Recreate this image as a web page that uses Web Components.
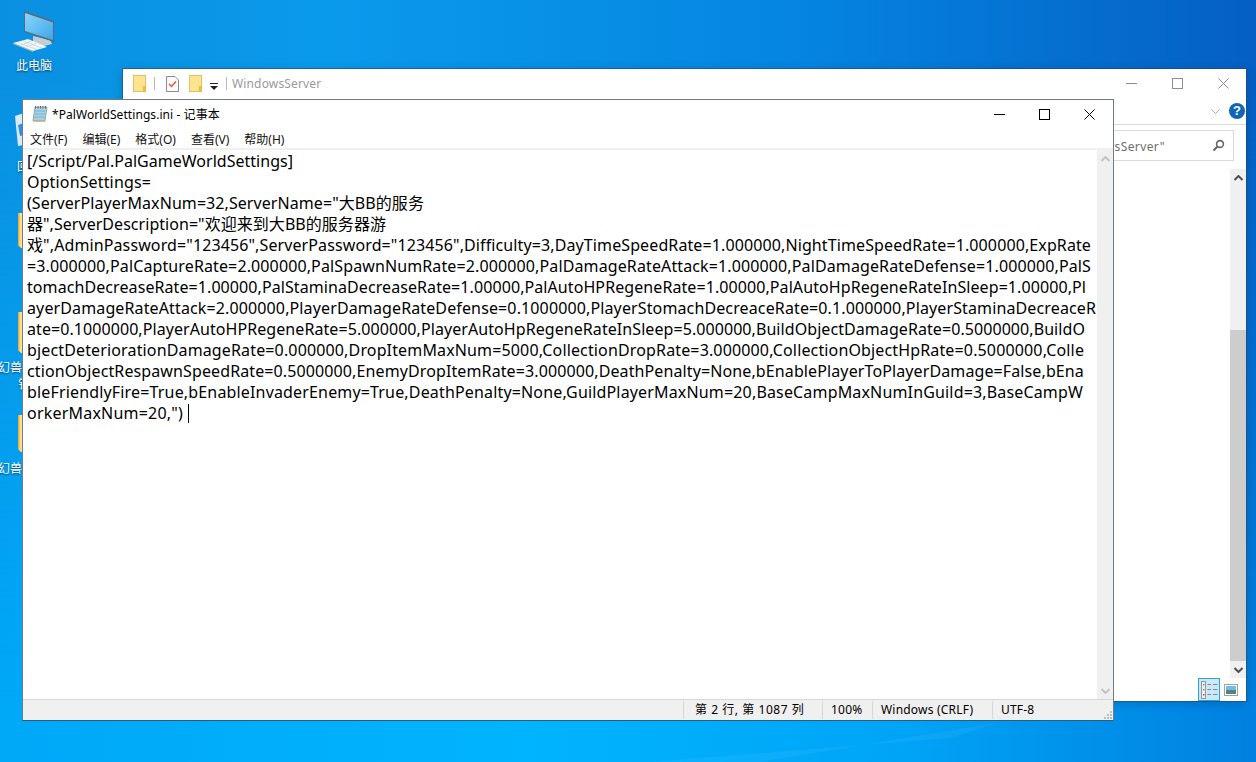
<!DOCTYPE html>
<html lang="zh-CN">
<head>
<meta charset="utf-8">
<title>PalWorldSettings.ini - 记事本</title>
<style>
    html, body { margin: 0; height: 100%; overflow: hidden; }
    body { font-family: "Noto Sans", "Noto Sans CJK SC", sans-serif; }
</style>
</head>
<body>
<win-desktop>
    <desk-icon style="top:7px" kind="pc" label="此电脑" pad="16" gap="4"></desk-icon>
    <desk-icon style="top:113px" kind="bin" label="回" pad="17" gap="9"></desk-icon>
    <desk-icon style="top:213px" kind="folder" tall="35"></desk-icon>
    <desk-icon style="top:312px" kind="folder" tall="41" label="幻兽" sub="钅" pad="-2" gap="6"></desk-icon>
    <desk-icon style="top:415px" kind="folder" tall="37" label="幻兽" pad="-2" gap="8"></desk-icon>
    <explorer-window></explorer-window>
    <notepad-window></notepad-window>
</win-desktop>

<script>
const FONT = '"Noto Sans", "Noto Sans CJK SC", sans-serif';

class WinDesktop extends HTMLElement {
    constructor() {
        super();
        this.attachShadow({ mode: 'open' });
    }
    connectedCallback() {
        this.shadowRoot.innerHTML = `
            <style>
                :host {
                    display: block;
                    position: relative;
                    width: 1256px;
                    height: 762px;
                    overflow: hidden;
                    background: linear-gradient(90deg, #00a8f8 0%, #00b4ff 42%, #00a4f6 72%, #0080e0 100%);
                }
                .top {
                    position: absolute;
                    inset: 0;
                    background: linear-gradient(90deg, #0a90e0 0%, #0a9aec 26%, #0585e0 64%, #055fc4 100%);
                    -webkit-mask-image: linear-gradient(#000 10%, transparent 92%);
                    mask-image: linear-gradient(#000 10%, transparent 92%);
                }
                .streak {
                    position: absolute;
                    inset: 0;
                    background: rgba(255, 255, 255, .05);
                    clip-path: polygon(650px 762px, 950px 738px, 1000px 722px, 760px 762px);
                }
            </style>
            <div class="top"></div>
            <div class="streak"></div>
            <slot></slot>
        `;
    }
}

class DeskIcon extends HTMLElement {
    constructor() {
        super();
        this.attachShadow({ mode: 'open' });
    }
    connectedCallback() {
        const tall = this.getAttribute('tall') || 36;
        const art = {
            pc: `<svg width="60" height="46" viewBox="0 0 60 46">
                    <defs><linearGradient id="scr" x1="0" y1="0" x2="1" y2="1"><stop offset="0" stop-color="#8ad6fa"/><stop offset="1" stop-color="#3da6ec"/></linearGradient></defs>
                    <polygon points="33,29 50,33 52,37 40,40 33,38" fill="#c3ced6"/>
                    <polygon points="24,4 54,14 54,35 24,25" fill="#5a6a76"/>
                    <polygon points="25,6 53,15.5 53,33 25,24" fill="url(#scr)"/>
                    <polygon points="13,36 28,32 47,40 33,44" fill="#f2f6f8"/>
                    <polygon points="13,36 33,44 33,45 13,37" fill="#a9b8c2"/>
                    <path d="M18 35.5L37 42.5M23 34L42 41M21 38L31 34.5M26 40L36 36.5" stroke="#c6d0d8" stroke-width=".7"/>
                </svg>`,
            bin: `<svg width="60" height="36" viewBox="0 0 60 36">
                    <polygon points="15,3 24,0 24,32 18,33" fill="#dce8f2"/>
                    <polygon points="18,12 24,10 24,22 20,23" fill="#2f8fe0"/>
                </svg>`,
            folder: `<svg width="60" height="${tall}" viewBox="0 0 60 ${tall}">
                    <path d="M18 0H24V${tall}H21L18 ${tall - 3}Z" fill="#fde08c"/>
                    <path d="M18 0H19.5V${tall - 2}L18 ${tall - 3}Z" fill="#e8ad48"/>
                </svg>`
        }[this.getAttribute('kind')];
        const label = this.getAttribute('label');
        const sub = this.getAttribute('sub');
        this.shadowRoot.innerHTML = `
            <style>
                :host {
                    position: absolute;
                    left: 0;
                    display: flex;
                    flex-direction: column;
                    font: 12px ${FONT};
                    color: #fff;
                    text-shadow: 0 1px 2px rgba(0, 0, 0, .6);
                }
                svg { display: block; }
                .label {
                    margin: ${this.getAttribute('gap') || 6}px 0 0 ${this.getAttribute('pad') || 0}px;
                    line-height: 17px;
                    white-space: pre;
                }
                .sub { margin-left: 18px; line-height: 17px; width: 4px; overflow: hidden; }
            </style>
            ${art}
            ${label ? `<div class="label">${label}</div>` : ''}
            ${sub ? `<div class="sub">${sub}</div>` : ''}
        `;
    }
}

class CaptionButtons extends HTMLElement {
    constructor() {
        super();
        this.attachShadow({ mode: 'open' });
    }
    connectedCallback() {
        const c = this.getAttribute('color') || '#000';
        const gap = this.getAttribute('gap') || '46';
        this.shadowRoot.innerHTML = `
            <style>
                :host { display: flex; align-items: center; }
                svg { display: block; margin-left: ${gap - 11}px; }
                svg:first-child { margin-left: 0; }
            </style>
            <svg width="11" height="11" viewBox="0 0 11 11"><path d="M0 5.5H11" stroke="${c}" fill="none"/></svg>
            <svg width="11" height="11" viewBox="0 0 11 11"><rect x=".5" y=".5" width="10" height="10" stroke="${c}" fill="none"/></svg>
            <svg width="11" height="11" viewBox="0 0 11 11"><path d="M.5 .5L10.5 10.5M10.5 .5L.5 10.5" stroke="${c}" stroke-width="1" fill="none"/></svg>
        `;
    }
}

class ScrollBar extends HTMLElement {
    constructor() {
        super();
        this.attachShadow({ mode: 'open' });
    }
    connectedCallback() {
        const arrow = this.hasAttribute('active') ? '#505050' : '#c4c4c4';
        const chev = d => `<svg width="9" height="6" viewBox="0 0 9 6"><path d="${d}" stroke="${arrow}" stroke-width="2" fill="none"/></svg>`;
        const space = this.getAttribute('before');
        this.shadowRoot.innerHTML = `
            <style>
                :host {
                    display: flex;
                    flex-direction: column;
                    width: 16px;
                    background: #f0f0f0;
                }
                .btn { height: 17px; display: flex; align-items: center; justify-content: center; flex: none; }
                .track { flex: 1; display: flex; flex-direction: column; }
                .space { flex: none; height: ${space || 0}px; }
                .thumb { flex: 1; background: ${this.hasAttribute('active') ? '#cdcdcd' : 'transparent'}; }
            </style>
            <div class="btn">${chev('M.5 5L4.5 1L8.5 5')}</div>
            <div class="track"><div class="space"></div><div class="thumb"></div></div>
            <div class="btn">${chev('M.5 1L4.5 5L8.5 1')}</div>
        `;
    }
}

class ExplorerWindow extends HTMLElement {
    constructor() {
        super();
        this.attachShadow({ mode: 'open' });
    }
    connectedCallback() {
        const folder = `<svg width="13" height="17" viewBox="0 0 13 17"><rect x=".5" y=".5" width="12" height="16" fill="#fde48f" stroke="#e4c063"/><rect x="10" y="11" width="2.5" height="5.5" fill="#eeb93f"/></svg>`;
        this.shadowRoot.innerHTML = `
            <style>
                :host {
                    position: absolute;
                    left: 123px;
                    top: 69px;
                    width: 1123px;
                    height: 632px;
                    box-sizing: border-box;
                    background: #fff;
                    display: flex;
                    flex-direction: column;
                    box-shadow: 0 0 0 1px rgba(40, 70, 110, .55), 0 2px 10px rgba(0, 0, 0, .2);
                    font: 12px ${FONT};
                }
                .title {
                    flex: none;
                    height: 29px;
                    display: flex;
                    align-items: center;
                    padding: 0 17px 0 10px;
                }
                .title svg { display: block; flex: none; }
                .bar { width: 1px; height: 13px; background: #b8b8b8; flex: none; }
                .name {
                    flex: 1;
                    color: #9a9a9a;
                    font-size: 12px;
                    letter-spacing: .15px;
                    margin-left: 5px;
                }
                .ribbon {
                    flex: none;
                    height: 26px;
                    border-bottom: 1px solid #dadada;
                    display: flex;
                    align-items: center;
                    justify-content: flex-end;
                    padding-right: 1px;
                    gap: 9px;
                }
                .help {
                    width: 16px;
                    height: 16px;
                    border-radius: 50%;
                    background: #0f66b4;
                    color: #fff;
                    font: bold 13px/16px "Liberation Sans", sans-serif;
                    text-align: center;
                }
                .address {
                    flex: none;
                    height: 44px;
                    display: flex;
                    justify-content: flex-end;
                    align-items: flex-start;
                    padding: 5px 12px 0 0;
                    box-sizing: border-box;
                }
                .search {
                    width: 300px;
                    height: 31px;
                    box-sizing: border-box;
                    border: 1px solid #d9d9d9;
                    display: flex;
                    align-items: center;
                    justify-content: flex-end;
                    gap: 47px;
                    padding-right: 8px;
                    color: #6d6d6d;
                    letter-spacing: .4px;
                }
                .search span { padding-top: 2px; }
                .body { flex: 1; display: flex; justify-content: flex-end; min-height: 0; }
                .views {
                    flex: none;
                    height: 23px;
                    display: flex;
                    justify-content: flex-end;
                    align-items: stretch;
                    padding-right: 8px;
                    gap: 4px;
                }
                .view-a {
                    width: 22px;
                    box-sizing: border-box;
                    background: #cce8f6;
                    border: 1px solid #27a4e0;
                    display: flex;
                    align-items: center;
                    justify-content: center;
                }
                .view-b { display: flex; align-items: center; }
            </style>
            <div class="title">
                ${folder}
                <span class="bar" style="margin:0 11px 0 8px"></span>
                <svg width="13" height="16" viewBox="0 0 13 16" style="margin-right:10px"><path d="M.5 .5H9L12.5 4V15.5H.5Z" fill="#fafafa" stroke="#8a8a8a"/><path d="M3 8L5.5 10.5L10 5.5" stroke="#e2562a" stroke-width="1.4" fill="none"/></svg>
                ${folder}
                <svg width="9" height="7" viewBox="0 0 9 7" style="margin:5px 0 0 8px"><path d="M0 0H8V1H0ZM0 3H8L4 7Z" fill="#222"/></svg>
                <span class="bar" style="margin-left:7px"></span>
                <span class="name">WindowsServer</span>
                <caption-buttons color="#8c8c8c" gap="46"></caption-buttons>
            </div>
            <div class="ribbon">
                <svg width="9" height="5" viewBox="0 0 9 5"><path d="M.5 .5L4.5 4.5L8.5 .5" stroke="#a8a8a8" fill="none"/></svg>
                <div class="help">?</div>
            </div>
            <div class="address">
                <div class="search"><span>wsServer"</span>
                    <svg width="13" height="13" viewBox="0 0 13 13"><circle cx="8" cy="5" r="3.4" stroke="#666" stroke-width="1.6" fill="none"/><path d="M5.5 7.5L1.5 11.5" stroke="#666" stroke-width="2.2"/></svg>
                </div>
            </div>
            <div class="body">
                <scroll-bar active before="144"></scroll-bar>
            </div>
            <div class="views">
                <div class="view-a">
                    <svg width="17" height="18" viewBox="0 0 17 18">
                        <rect x=".5" y=".5" width="4" height="17" fill="#eee" stroke="#999"/>
                        <rect x="2" y="3" width="1.4" height="1.4" fill="#888"/><rect x="2" y="8" width="1.4" height="1.4" fill="#888"/><rect x="2" y="13" width="1.4" height="1.4" fill="#c33"/>
                        <path d="M6.5 3.5H10M12 3.5H16.5M6.5 8.5H10M12 8.5H16.5M6.5 13.5H10M12 13.5H16.5" stroke="#7d8a94"/>
                    </svg>
                </div>
                <div class="view-b">
                    <svg width="14" height="12" viewBox="0 0 14 12"><rect x=".5" y=".5" width="13" height="11" fill="#fff" stroke="#a0a0a0"/><rect x="2" y="2" width="10" height="4" fill="#6cbcf0"/><rect x="2" y="6" width="10" height="4" fill="#5c8278"/></svg>
                </div>
            </div>
        `;
    }
}

class NotepadWindow extends HTMLElement {
    constructor() {
        super();
        this.attachShadow({ mode: 'open' });
    }
    connectedCallback() {
        // second value is where the line ends in the reference (page x)
        const lines = [
            ['[/Script/Pal.PalGameWorldSettings]', 293],
            ['OptionSettings=', 151],
            ['(ServerPlayerMaxNum=32,ServerName="大BB的服务', 424],
            ['器",ServerDescription="欢迎来到大BB的服务器游', 386],
            ['戏",AdminPassword="123456",ServerPassword="123456",Difficulty=3,DayTimeSpeedRate=1.000000,NightTimeSpeedRate=1.000000,ExpRate', 1091],
            ['=3.000000,PalCaptureRate=2.000000,PalSpawnNumRate=2.000000,PalDamageRateAttack=1.000000,PalDamageRateDefense=1.000000,PalS', 1091],
            ['tomachDecreaseRate=1.00000,PalStaminaDecreaseRate=1.00000,PalAutoHPRegeneRate=1.00000,PalAutoHpRegeneRateInSleep=1.00000,Pl', 1086],
            ['ayerDamageRateAttack=2.000000,PlayerDamageRateDefense=0.1000000,PlayerStomachDecreaceRate=0.1.000000,PlayerStaminaDecreaceR', 1096],
            ['ate=0.1000000,PlayerAutoHPRegeneRate=5.000000,PlayerAutoHpRegeneRateInSleep=5.000000,BuildObjectDamageRate=0.5000000,BuildO', 1085],
            ['bjectDeteriorationDamageRate=0.000000,DropItemMaxNum=5000,CollectionDropRate=3.000000,CollectionObjectHpRate=0.5000000,Colle', 1084],
            ['ctionObjectRespawnSpeedRate=0.5000000,EnemyDropItemRate=3.000000,DeathPenalty=None,bEnablePlayerToPlayerDamage=False,bEna', 1084],
            ['bleFriendlyFire=True,bEnableInvaderEnemy=True,DeathPenalty=None,GuildPlayerMaxNum=20,BaseCampMaxNumInGuild=3,BaseCampW', 1083],
            ['orkerMaxNum=20,")', 183]
        ];
        const esc = s => s.replace(/"/g, '&quot;');
        const rows = lines.map(l => `<div class="ln"><span data-end="${l[1]}">${esc(l[0])}</span></div>`).join('');
        const menus = ['文件(F)', '编辑(E)', '格式(O)', '查看(V)', '帮助(H)'].map(m => `<span>${m}</span>`).join('');
        this.shadowRoot.innerHTML = `
            <style>
                :host {
                    position: absolute;
                    left: 22px;
                    top: 99px;
                    width: 1092px;
                    height: 622px;
                    box-sizing: border-box;
                    border: 1px solid #6f7b85;
                    border-bottom-color: #2f5c7c;
                    background: #fff;
                    display: flex;
                    flex-direction: column;
                    font: 12px ${FONT};
                    color: #000;
                }
                .title {
                    flex: none;
                    height: 30px;
                    box-sizing: border-box;
                    display: flex;
                    align-items: center;
                    padding: 0 18px 2px 9px;
                    gap: 4px;
                }
                .title span { flex: 1; letter-spacing: .07px; }
                .menu {
                    flex: none;
                    height: 18px;
                    display: flex;
                    align-items: center;
                    gap: 15px;
                    padding-left: 7px;
                    color: #111;
                }
                .edge { flex: none; height: 2px; background: #f0f0f0; }
                .main { flex: 1; display: flex; min-height: 0; }
                .text {
                    flex: 1;
                    padding: 1px 0 0 4px;
                    font-size: 16px;
                    line-height: 21px;
                    white-space: pre;
                    overflow: hidden;
                }
                .ln { height: 21px; }
                .ln:last-child::after {
                    content: "";
                    display: inline-block;
                    width: 1px;
                    height: 19px;
                    margin-left: 5px;
                    background: #000;
                    vertical-align: -4px;
                }
                .status {
                    flex: none;
                    height: 21px;
                    box-sizing: border-box;
                    background: #f0f0f0;
                    border-top: 1px solid #d7d7d7;
                    display: flex;
                    align-items: stretch;
                    position: relative;
                }
                .grow { flex: 1; }
                .cell {
                    flex: none;
                    box-sizing: border-box;
                    border-left: 1px solid #d7d7d7;
                    margin: 1px 0;
                    padding-bottom: 2px;
                    display: flex;
                    align-items: center;
                    white-space: pre;
                    letter-spacing: .2px;
                }
                .grip { position: absolute; right: 1px; bottom: 1px; }
            </style>
            <div class="title">
                <svg width="16" height="16" viewBox="0 0 16 16">
                    <polygon points="3,1 15,1 13,15 1,15" fill="#a6d2e4" stroke="#7f97a4" stroke-width=".8"/>
                    <path d="M3 5H13M3 8H13M2.5 11H12.5" stroke="#7ab0c8"/>
                    <path d="M3.5 0V2.5M6 0V2.5M8.5 0V2.5M11 0V2.5M13.5 0V2.5" stroke="#666"/>
                    <path d="M1 15H13" stroke="#c8b070" stroke-width="1.2"/>
                </svg>
                <span>*PalWorldSettings.ini - 记事本</span>
                <caption-buttons gap="45"></caption-buttons>
            </div>
            <div class="menu">${menus}</div>
            <div class="edge"></div>
            <div class="main">
                <div class="text">${rows}</div>
                <scroll-bar></scroll-bar>
            </div>
            <div class="status">
                <div class="grow"></div>
                <div class="cell" style="width:139px;padding-left:11px;letter-spacing:.55px">第 2 行, 第 1087 列</div>
                <div class="cell" style="width:50px;padding-left:8px">100%</div>
                <div class="cell" style="width:120px;padding-left:8px">Windows (CRLF)</div>
                <div class="cell" style="width:121px;padding-left:8px">UTF-8</div>
                <svg class="grip" width="9" height="9" viewBox="0 0 9 9"><path d="M7 1h2v2H7zM4 4h2v2H4zM7 4h2v2H7zM1 7h2v2H1zM4 7h2v2H4zM7 7h2v2H7z" fill="#bdbdbd"/></svg>
            </div>
        `;
        // stretch each line to the reference's hinted width
        this.shadowRoot.querySelectorAll('.ln span').forEach(s => {
            const box = s.getBoundingClientRect();
            const extra = Number(s.dataset.end) - box.right;
            s.style.letterSpacing = (extra / s.textContent.length).toFixed(3) + 'px';
        });
    }
}

customElements.define('win-desktop', WinDesktop);
customElements.define('desk-icon', DeskIcon);
customElements.define('caption-buttons', CaptionButtons);
customElements.define('scroll-bar', ScrollBar);
customElements.define('explorer-window', ExplorerWindow);
customElements.define('notepad-window', NotepadWindow);
</script>
</body>
</html>
